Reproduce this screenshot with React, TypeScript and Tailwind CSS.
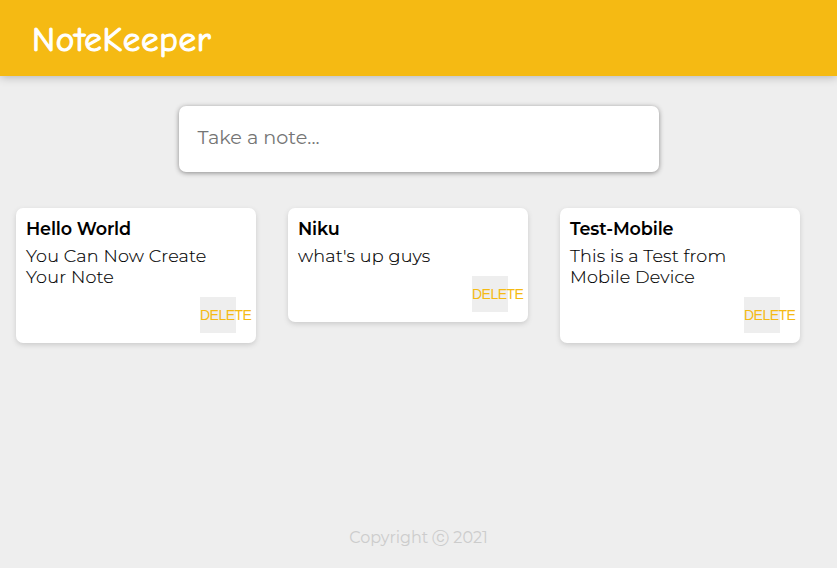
type Note = { title: string; lines: string[] };

const notes: Note[] = [
  { title: "Hello World", lines: ["You Can Now Create", "Your Note"] },
  { title: "Niku", lines: ["what's up guys"] },
  { title: "Test-Mobile", lines: ["This is a Test from", "Mobile Device"] },
];

function NoteCard({ note }: { note: Note }) {
  return (
    <article className="w-60 rounded-[7px] bg-white p-[10px] shadow-[0_2px_5px_#cccccc]">
      <h2 className="mb-[5px] text-[17.6px] leading-[22px] font-semibold tracking-[-0.15px] text-black">
        {note.title}
      </h2>
      <div className="mb-[10px] text-[17.6px] leading-[21px] font-light tracking-[0.17px] whitespace-nowrap text-black [-webkit-text-stroke:0.15px_black]">
        {note.lines.map((line) => (
          <p key={line}>{line}</p>
        ))}
      </div>
      <button className="mr-[10px] ml-auto flex h-9 w-9 items-center bg-[#eeeeee] pb-px font-['Liberation_Sans',Arial,sans-serif] text-[14px] leading-none font-normal tracking-[-0.5px] whitespace-nowrap text-[#f5ba13]">
        DELETE
      </button>
    </article>
  );
}

export default function App() {
  return (
    <div className="flex h-[568px] w-full flex-col overflow-hidden bg-[#eeeeee] font-[Montserrat,Inter,sans-serif]">
      <header className="flex h-[76px] shrink-0 items-center bg-[#f5ba13] px-8 shadow-[0_0_10px_0_rgba(0,0,0,0.3)]">
        <h1 className="font-['Comic_Sans_MS','Comic_Neue',cursive] pt-[3px] text-[35px] leading-[48px] font-normal tracking-[0.7px] text-white [-webkit-text-stroke:1.1px_white]">
          NoteKeeper
        </h1>
      </header>
      <form className="mx-auto mt-[30px] h-[66px] w-[480px] shrink-0 rounded-[7px] bg-white pr-[18px] pl-[19px] pt-[19px] shadow-[0_1px_5px_rgb(138,137,137)]">
        <div className="text-[19.2px] leading-6 font-normal text-[#757575]">Take a note...</div>
      </form>
      <main className="mt-9 flex items-start gap-8 px-4">
        {notes.map((note) => (
          <NoteCard key={note.title} note={note} />
        ))}
      </main>
      <footer className="mt-auto mb-[19px] flex h-[22px] items-center justify-center gap-[4px] text-[16px] leading-5 text-[#cccccc]">
        <span>Copyright</span>
        <span className="font-['DejaVu_Sans',sans-serif] text-[17px]">ⓒ</span>
        <span>2021</span>
      </footer>
    </div>
  );
}
